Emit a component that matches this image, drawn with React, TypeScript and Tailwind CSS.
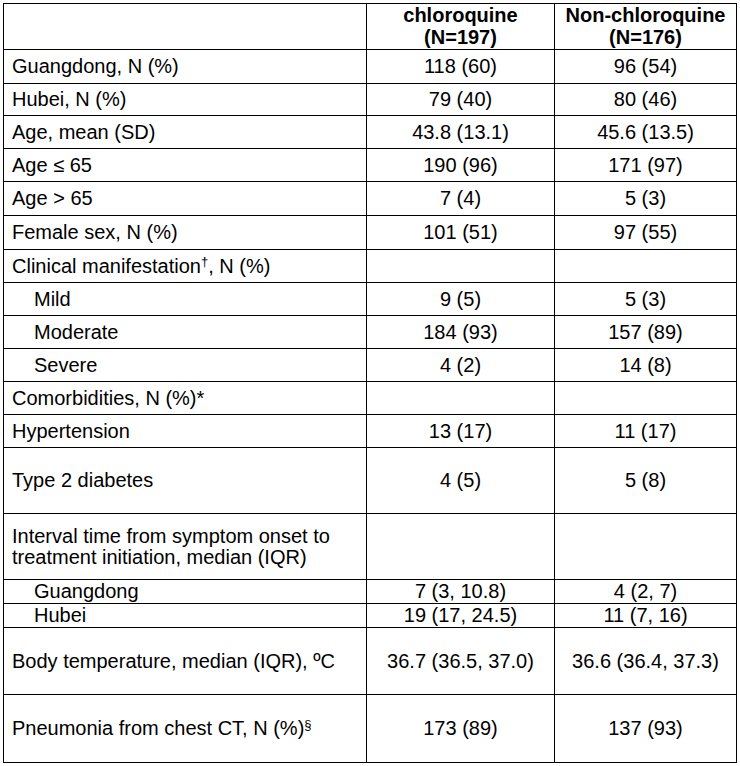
import type { ReactNode } from "react"

interface Row {
  label: ReactNode
  a: string
  b: string
  h: string
  indent?: boolean
}

const rows: Row[] = [
  { label: "Guangdong, N (%)", a: "118 (60)", b: "96 (54)", h: "h-[34px]" },
  { label: "Hubei, N (%)", a: "79 (40)", b: "80 (46)", h: "h-[32px]" },
  { label: "Age, mean (SD)", a: "43.8 (13.1)", b: "45.6 (13.5)", h: "h-[33px]" },
  { label: "Age ≤ 65", a: "190 (96)", b: "171 (97)", h: "h-[33px]" },
  { label: "Age > 65", a: "7 (4)", b: "5 (3)", h: "h-[34px]" },
  { label: "Female sex, N (%)", a: "101 (51)", b: "97 (55)", h: "h-[34px]" },
  {
    label: (
      <>
        Clinical manifestation<sup className="text-[13px]">†</sup>, N (%)
      </>
    ),
    a: "",
    b: "",
    h: "h-[33px]",
  },
  { label: "Mild", a: "9 (5)", b: "5 (3)", h: "h-[33px]", indent: true },
  { label: "Moderate", a: "184 (93)", b: "157 (89)", h: "h-[33px]", indent: true },
  { label: "Severe", a: "4 (2)", b: "14 (8)", h: "h-[33px]", indent: true },
  { label: "Comorbidities, N (%)*", a: "", b: "", h: "h-[33px]" },
  { label: "Hypertension", a: "13 (17)", b: "11 (17)", h: "h-[33px]" },
  { label: "Type 2 diabetes", a: "4 (5)", b: "5 (8)", h: "h-[66px]" },
  {
    label: (
      <>
        Interval time from symptom onset to
        <br />
        treatment initiation, median (IQR)
      </>
    ),
    a: "",
    b: "",
    h: "h-[66px]",
  },
  { label: "Guangdong", a: "7 (3, 10.8)", b: "4 (2, 7)", h: "h-[24px]", indent: true },
  { label: "Hubei", a: "19 (17, 24.5)", b: "11 (7, 16)", h: "h-[24px]", indent: true },
  {
    label: "Body temperature, median (IQR), ºC",
    a: "36.7 (36.5, 37.0)",
    b: "36.6 (36.4, 37.3)",
    h: "h-[67px]",
  },
  {
    label: (
      <>
        Pneumonia from chest CT, N (%)<sup className="text-[13px]">§</sup>
      </>
    ),
    a: "173 (89)",
    b: "137 (93)",
    h: "h-[68px]",
  },
]

export default function App() {
  return (
    <div className="min-h-[766px] bg-white pt-[3px] pl-[3px] font-['Liberation_Sans',Arial,sans-serif] text-[20px] text-black">
      <div className="w-[734px] border-l border-t border-black">
        {/* header */}
        <div className="flex h-[46px] border-b border-black font-bold leading-[22px]">
          <div className="w-[363px] border-r border-black"></div>
          <div className="flex w-[188px] flex-col items-center border-r border-black">
            <span>chloroquine</span>
            <span>(N=197)</span>
          </div>
          <div className="flex w-[182px] flex-col items-center border-r border-black">
            <span>Non-chloroquine</span>
            <span>(N=176)</span>
          </div>
        </div>

        {rows.map((r, i) => (
          <div key={i} className={`flex border-b border-black leading-[21px] ${r.h}`}>
            <div
              className={`flex w-[363px] items-center border-r border-black ${
                r.indent ? "pl-[30px]" : "pl-2"
              }`}
            >
              <span>{r.label}</span>
            </div>
            <div className="flex w-[188px] items-center justify-center border-r border-black">
              {r.a}
            </div>
            <div className="flex w-[182px] items-center justify-center border-r border-black">
              {r.b}
            </div>
          </div>
        ))}
      </div>
    </div>
  )
}
